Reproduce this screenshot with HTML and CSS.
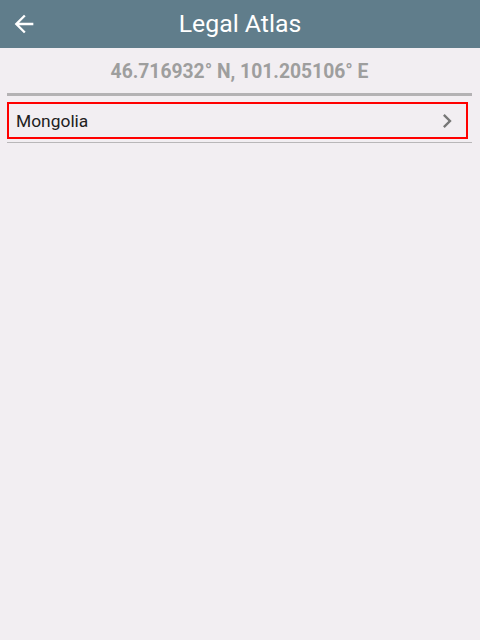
FILE: index.html
```html
<!DOCTYPE html>
<html>
<head>
<meta charset="utf-8">
<link rel="stylesheet" href="styles.css">
</head>
<body>
<header class="bar">
  <button class="back" aria-label="Back">
    <svg width="28" height="28" viewBox="0 0 24 24"><path d="M20 11H7.83l5.59-5.59L12 4l-8 8 8 8 1.41-1.41L7.83 13H20v-2z" fill="#fff"/></svg>
  </button>
  <h1 class="title">Legal Atlas</h1>
</header>
<main class="content">
  <div class="coords">46.716932° N, 101.205106° E</div>
  <div class="divider"></div>
  <div class="row">
    <span class="row-label">Mongolia</span>
    <svg class="chev" width="28" height="28" viewBox="0 0 24 24"><path d="M8.59 16.59 13.17 12 8.59 7.41 10 6l6 6-6 6z" fill="#777"/></svg>
  </div>
  <div class="rule"></div>
</main>
</body>
</html>
```
FILE: styles.css
```css
* { box-sizing: border-box; }
html, body { margin: 0; padding: 0; }
body {
  width: 480px;
  height: 640px;
  background: #f2eef2;
  font-family: Roboto, "Noto Sans", sans-serif;
}
.bar {
  height: 48px;
  background: #607d8b;
  display: flex;
  align-items: center;
  justify-content: center;
  position: relative;
}
.back {
  position: absolute;
  left: 10px;
  top: 10px;
  width: 28px;
  height: 28px;
  padding: 0;
  border: 0;
  background: none;
  display: flex;
}
.title {
  margin: 0;
  color: #fff;
  font-size: 24.8px;
  font-weight: 400;
  line-height: 48px;
}
.content {
  padding: 0 8px 0 7px;
}
.coords {
  text-align: center;
  color: #9e9e9e;
  font-weight: 700;
  font-size: 19.3px;
  line-height: 24px;
  padding: 12px 0 9px;
}
.divider {
  height: 3px;
  background: #b4b2b4;
}
.row {
  margin: 6px 4px 0 0;
  height: 37px;
  border: 2px solid #f00;
  display: flex;
  align-items: center;
  justify-content: space-between;
  padding: 0 5px 0 7px;
  font-size: 17.4px;
  color: #212121;
}
.chev { display: block; }
.rule {
  margin-top: 3px;
  height: 1px;
  background: #b9b7b9;
}
```
